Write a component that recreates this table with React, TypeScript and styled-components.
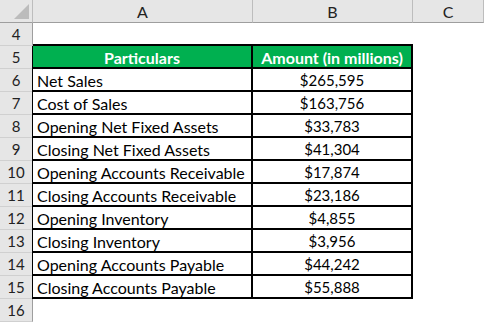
import { createGlobalStyle, styled } from "styled-components";

const GlobalStyle = createGlobalStyle`
    html, body {
        margin: 0;
        padding: 0;
        background: #fff;
    }
    body {
        font-family: Lato, "Liberation Sans", sans-serif;
    }
`;

const rows = [
    { label: "Net Sales", value: "$265,595" },
    { label: "Cost of Sales", value: "$163,756" },
    { label: "Opening Net Fixed Assets", value: "$33,783" },
    { label: "Closing Net Fixed Assets", value: "$41,304" },
    { label: "Opening Accounts Receivable", value: "$17,874" },
    { label: "Closing Accounts Receivable", value: "$23,186" },
    { label: "Opening Inventory", value: "$4,855" },
    { label: "Closing Inventory", value: "$3,956" },
    { label: "Opening Accounts Payable", value: "$44,242" },
    { label: "Closing Accounts Payable", value: "$55,888" },
];

export default function App() {
    return (
        <>
            <GlobalStyle />
            <Sheet>
                <Corner>
                    <CornerMark />
                </Corner>
                <ColHead>A</ColHead>
                <ColHead>B</ColHead>
                <ColHead>C</ColHead>

                <RowHead>4</RowHead>
                <Cell $boxBottom />
                <Cell $boxBottom />
                <Cell />

                <RowHead>5</RowHead>
                <HeadCell $first>Particulars</HeadCell>
                <HeadCell>Amount (in millions)</HeadCell>
                <Cell />

                {rows.map((r, i) => (
                    <Row key={r.label} num={i + 6} label={r.label} value={r.value} />
                ))}

                <RowHead>16</RowHead>
                <Cell />
                <Cell />
                <Cell />
            </Sheet>
        </>
    );
}

const Row = ({ num, label, value }: { num: number; label: string; value: string }) => (
    <>
        <RowHead>{num}</RowHead>
        <TableCell $first>{label}</TableCell>
        <TableCell $center>{value}</TableCell>
        <Cell />
    </>
);

const Sheet = styled.div`
    display: grid;
    grid-template-columns: 33px 220px 160px 1fr;
    grid-auto-rows: 23px;
    width: 484px;
    height: 322px;
    overflow: hidden;
    font-size: 16px;
    color: #000;
`;

const Corner = styled.div`
    position: relative;
    background: #e6e6e6;
    border-right: 1px solid #bdbdbd;
    border-bottom: 1px solid #9e9e9e;
    box-sizing: border-box;
`;

const CornerMark = styled.div`
    position: absolute;
    right: 3px;
    bottom: 3px;
    width: 0;
    height: 0;
    border-left: 15px solid transparent;
    border-bottom: 15px solid #bcbcbc;
`;

const ColHead = styled.div`
    box-sizing: border-box;
    background: #e6e6e6;
    border-right: 1px solid #bdbdbd;
    border-bottom: 1px solid #9e9e9e;
    display: flex;
    align-items: center;
    justify-content: center;
    font-size: 16px;
    color: #222;
`;

const RowHead = styled.div`
    box-sizing: border-box;
    background: #e6e6e6;
    border-right: 1px solid #9e9e9e;
    border-bottom: 1px solid #d0d0d0;
    display: flex;
    align-items: center;
    justify-content: center;
    font-size: 15px;
    color: #222;
`;

const Cell = styled.div<{ $boxBottom?: boolean }>`
    box-sizing: border-box;
    background: #fff;
    border-bottom: ${(p) => (p.$boxBottom ? "2px solid #000" : "none")};
`;

const TableCell = styled.div<{ $first?: boolean; $center?: boolean }>`
    box-sizing: border-box;
    display: flex;
    align-items: center;
    justify-content: ${(p) => (p.$center ? "center" : "flex-start")};
    padding-left: ${(p) => (p.$center ? "0" : "4px")};
    padding-top: 1px;
    font-size: ${(p) => (p.$center ? "15px" : "16px")};
    border-bottom: 2px solid #000;
    border-right: 2px solid #000;
    white-space: nowrap;
    margin-left: ${(p) => (p.$first ? "-1px" : "0")};
    border-left: ${(p) => (p.$first ? "1px solid #000" : "none")};
`;

const HeadCell = styled(TableCell)`
    justify-content: center;
    padding-left: 0;
    font-size: 16px;
    background: #00b050;
    color: #fff;
    font-weight: 700;
`;
